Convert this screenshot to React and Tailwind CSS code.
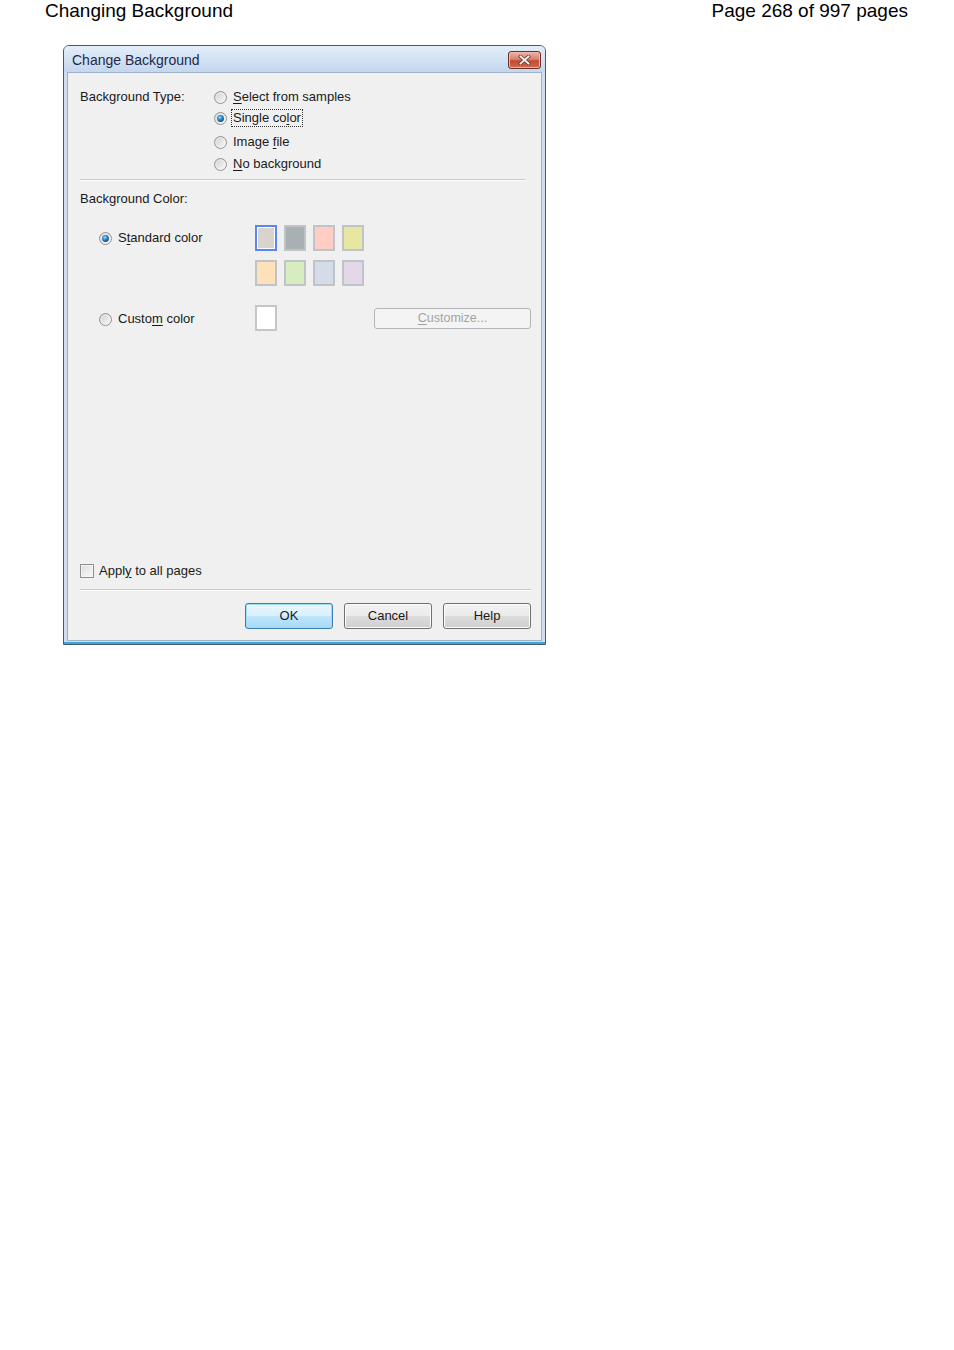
import React from "react";

const U = ({ children }) => <span className="underline underline-offset-[2px]">{children}</span>;

function Radio({ checked = false }) {
  return (
    <svg width="13" height="13" viewBox="0 0 13 13" className="shrink-0">
      <defs>
        <linearGradient id={checked ? "rgc" : "rgu"} x1="0" y1="0" x2="1" y2="1">
          <stop offset="0" stopColor="#cfcfcf" />
          <stop offset="1" stopColor="#fbfbfb" />
        </linearGradient>
        <radialGradient id="rdot" cx="0.4" cy="0.35" r="0.7">
          <stop offset="0" stopColor="#9fe0ff" />
          <stop offset="0.45" stopColor="#2f8fd1" />
          <stop offset="1" stopColor="#103c70" />
        </radialGradient>
      </defs>
      <circle cx="6.5" cy="6.5" r="6" fill={`url(#${checked ? "rgc" : "rgu"})`} stroke="#929292" strokeWidth="1" />
      <circle cx="6.5" cy="6.5" r="4.6" fill="none" stroke="#f4f4f4" strokeWidth="0.8" opacity="0.7" />
      {checked && <circle cx="6.5" cy="6.5" r="3.4" fill="url(#rdot)" />}
    </svg>
  );
}

function Swatch({ color, selected = false }) {
  return (
    <div
      className={
        "w-[22px] h-[26px] " +
        (selected
          ? "border-2 border-[#5b86f0] p-[1px] bg-white"
          : "border-2 border-[#c0c3c7]")
      }
    >
      <div className="w-full h-full" style={{ backgroundColor: color }} />
    </div>
  );
}

function Button({ children, def = false, disabled = false, className = "" }) {
  if (disabled) {
    return (
      <div className={"flex items-center justify-center rounded-[3px] border border-[#b3b7ba] bg-[#f4f4f4] text-[#a3a3a3] " + className}>
        {children}
      </div>
    );
  }
  if (def) {
    return (
      <div className={"flex items-center justify-center rounded-[3px] border border-[#3c7fb1] bg-[linear-gradient(to_bottom,#eaf6fd_0%,#d9f0fc_50%,#bee6fd_51%,#a7d9f5_100%)] shadow-[inset_0_0_0_1px_#9cdcf7] " + className}>
        {children}
      </div>
    );
  }
  return (
    <div className={"flex items-center justify-center rounded-[3px] border border-[#707070] bg-[linear-gradient(to_bottom,#f2f2f2_0%,#ebebeb_50%,#dddddd_51%,#cfcfcf_100%)] shadow-[inset_0_0_0_1px_#fcfcfc] " + className}>
      {children}
    </div>
  );
}

export default function App() {
  const swatches1 = ["#d8d3cd", "#a9b0b3", "#ffcdc3", "#e8e7a2"];
  const swatches2 = ["#fee0b9", "#d8ecc2", "#d4dbe9", "#e3d7e8"];
  return (
    <div className="bg-white w-[954px] min-h-[1350px] font-['Liberation_Sans',Arial,sans-serif]">
      <div className="flex justify-between pl-[45px] pr-[46px] text-[19px] leading-[22px] text-black">
        <span>Changing Background</span>
        <span>Page 268 of 997 pages</span>
      </div>

      <div className="ml-[63px] mt-[23px] w-[483px] rounded-t-[6px] border border-[#4a5a6c] bg-[#cfddee] text-[13px] text-[#1a1a1a]">
        {/* Title bar */}
        <div className="h-[26px] rounded-t-[5px] bg-[linear-gradient(to_bottom,#e4eef9_0%,#d3e2f3_50%,#c4d7ee_100%)] flex items-center justify-between pl-[8px] pr-[4px] pt-[1px]">
          <span className="text-[14px] text-[#1d2a48] leading-none">Change Background</span>
          <div className="w-[33px] h-[18px] rounded-[3px] border border-[#6e2c26] bg-[linear-gradient(to_bottom,#eab3a7_0%,#d8836f_45%,#c24a33_55%,#cf6a4d_100%)] flex items-center justify-center shadow-[inset_0_0_0_1px_#f1b9ab]">
            <svg width="13" height="10" viewBox="0 0 13 10">
              <path d="M2.5 1.5 L10.5 8.5 M10.5 1.5 L2.5 8.5" stroke="#6a3a32" strokeWidth="3.4" strokeLinecap="square" />
              <path d="M2.5 1.5 L10.5 8.5 M10.5 1.5 L2.5 8.5" stroke="#f6f6f6" strokeWidth="1.8" strokeLinecap="square" />
            </svg>
          </div>
        </div>

        {/* frame + content */}
        <div className="px-[3px] pb-[1px] border-b-2 border-[#3aa7d4]">
          <div className="h-[569px] bg-[#f0f0f0] border border-[#9eb3cb] flex flex-col pl-[12px] pr-[10px]">
            {/* Background Type */}
            <div className="flex pt-[14px]">
              <div className="w-[134px] h-[20px] flex items-center">Background Type:</div>
              <div className="flex flex-col">
                <div className="h-[20px] flex items-center gap-[6px]">
                  <Radio />
                  <span><U>S</U>elect from samples</span>
                </div>
                <div className="h-[20px] mt-[1px] flex items-center gap-[4px]">
                  <Radio checked />
                  <span className="border border-dotted border-[#333] px-[1px] leading-[16px]">Single co<U>l</U>or</span>
                </div>
                <div className="h-[20px] mt-[4px] flex items-center gap-[6px]">
                  <Radio />
                  <span>Image <U>f</U>ile</span>
                </div>
                <div className="h-[20px] mt-[2px] flex items-center gap-[6px]">
                  <Radio />
                  <span><U>N</U>o background</span>
                </div>
              </div>
            </div>

            <div className="mt-[5px] mr-[6px] h-[2px] border-t border-[#c9c9c9] border-b border-b-white" />

            <div className="mt-[8px] h-[20px] flex items-center">Background Color:</div>

            {/* Standard color */}
            <div className="flex mt-[16px]">
              <div className="w-[175px] pl-[19px] h-[26px] flex items-center gap-[6px]">
                <Radio checked />
                <span>S<U>t</U>andard color</span>
              </div>
              <div className="flex flex-col gap-[9px]">
                <div className="flex gap-[7px]">
                  {swatches1.map((c, i) => (
                    <Swatch key={c} color={c} selected={i === 0} />
                  ))}
                </div>
                <div className="flex gap-[7px]">
                  {swatches2.map((c) => (
                    <Swatch key={c} color={c} />
                  ))}
                </div>
              </div>
            </div>

            {/* Custom color */}
            <div className="flex mt-[19px] items-center">
              <div className="w-[175px] pl-[19px] h-[26px] flex items-center gap-[6px] pt-[2px]">
                <Radio />
                <span>Custo<U>m</U> color</span>
              </div>
              <div className="w-[22px] h-[26px] border-2 border-[#c4c6ca] bg-white" />
              <div className="flex-1" />
              <Button disabled className="w-[157px] h-[21px] text-[12.5px] mt-[1px]">
                <span><U>C</U>ustomize...</span>
              </Button>
            </div>

            {/* bottom */}
            <div className="mt-auto flex items-center gap-[5px] h-[15px]">
              <div className="w-[14px] h-[14px] border border-[#8e8f8f] bg-[linear-gradient(135deg,#dcdcdc,#fafafa)] shadow-[inset_0_0_0_1px_#f4f4f4]" />
              <span>Appl<U>y</U> to all pages</span>
            </div>
            <div className="mt-[11px] h-[2px] border-t border-[#c9c9c9] border-b border-b-white" />
            <div className="mt-[12px] mb-[11px] flex justify-end gap-[11px]">
              <Button def className="w-[88px] h-[26px]">OK</Button>
              <Button className="w-[88px] h-[26px]">Cancel</Button>
              <Button className="w-[88px] h-[26px]">Help</Button>
            </div>
          </div>
        </div>
      </div>
    </div>
  );
}
